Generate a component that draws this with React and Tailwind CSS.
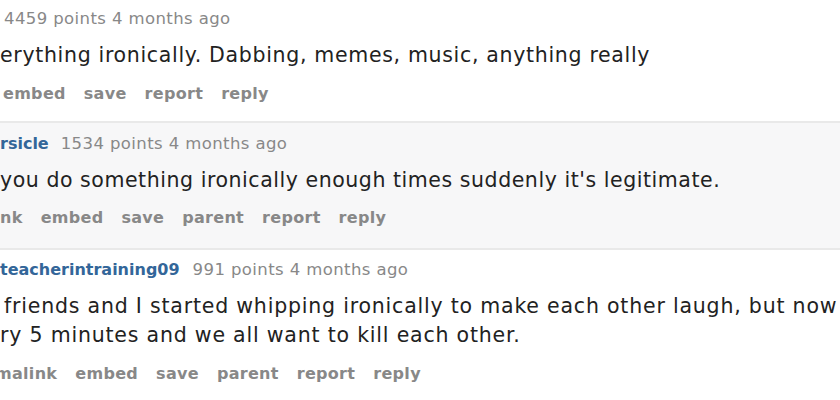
const tagline = "text-[16.5px] leading-[20px] text-[#888] whitespace-nowrap";
const meta = "tracking-[0.4px]";
const body = "text-[20.5px] leading-[29px] text-[#222] whitespace-nowrap";
const buttons = "flex gap-[18px] text-[16px] leading-[20px] font-bold text-[#888] tracking-[0.3px] whitespace-nowrap";

const Buttons = ({ items, className }) => (
  <ul className={`${buttons} ${className}`}>
    {items.map((item) => (
      <li key={item}>{item}</li>
    ))}
  </ul>
);

export default function App() {
  return (
    <div className="w-[840px] h-[400px] overflow-hidden bg-white font-['DejaVu_Sans',Verdana,sans-serif]">
      <div className="pt-[9px] pb-[17px]">
        <p className={`${tagline} ${meta} pl-[4px]`}>4459 points 4 months ago</p>
        <p className={`${body} tracking-[0.68px] mt-[12px]`}>
          erything ironically. Dabbing, memes, music, anything really
        </p>
        <Buttons
          className="mt-[14px] pl-[3px]"
          items={["embed", "save", "report", "reply"]}
        />
      </div>

      <div className="border-y-2 border-[#e9e9e9] bg-[#f7f7f8] pt-[11px] pb-[20px]">
        <p className={`${tagline} flex gap-[12px]`}>
          <span className="text-[16px] font-bold text-[#369]">rsicle</span>
          <span className={meta}>1534 points 4 months ago</span>
        </p>
        <p className={`${body} tracking-[0.55px] mt-[12px]`}>
          you do something ironically enough times suddenly it's legitimate.
        </p>
        <Buttons
          className="mt-[13px]"
          items={["nk", "embed", "save", "parent", "report", "reply"]}
        />
      </div>

      <div className="pt-[10px]">
        <p className={`${tagline} flex gap-[13px]`}>
          <span className="text-[16px] font-bold text-[#369]">teacherintraining09</span>
          <span className={meta}>991 points 4 months ago</span>
        </p>
        <div className="mt-[12px] tracking-[0.8px]">
          <p className={`${body} pl-[4px]`}>
            friends and I started whipping ironically to make each other laugh, but now
          </p>
          <p className={body}>ry 5 minutes and we all want to kill each other.</p>
        </div>
        <Buttons
          className="mt-[14px] -ml-[5px]"
          items={["malink", "embed", "save", "parent", "report", "reply"]}
        />
      </div>
    </div>
  );
}
